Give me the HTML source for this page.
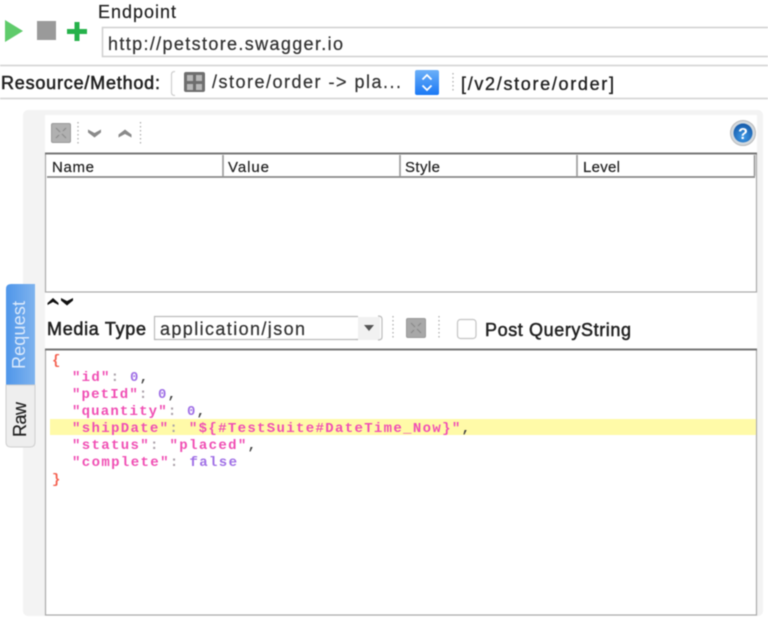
<!DOCTYPE html>
<html><head><meta charset="utf-8"><style>
html,body{margin:0;padding:0;background:#fff;width:768px;height:626px;overflow:hidden}
svg{display:block;filter:blur(.6px)}
text{font-family:"Liberation Sans",sans-serif;fill:#222;stroke:#222;stroke-width:.2px}
.m{font-family:"Liberation Mono",monospace;font-size:14px;font-weight:bold;stroke:none}
.k{fill:#f04fb4}.p{fill:#a9a0a8}.n{fill:#a070e6}.c{fill:#444}.b{fill:#f4604f}
</style></head><body>
<svg width="768" height="626" viewBox="0 0 768 626" xmlns="http://www.w3.org/2000/svg">
<defs>
<linearGradient id="bl" x1="0" y1="0" x2="0" y2="1"><stop offset="0" stop-color="#6cb0f8"/><stop offset="1" stop-color="#1a78f5"/></linearGradient>
<linearGradient id="tb" x1="0" y1="0" x2="1" y2="0"><stop offset="0" stop-color="#4f96ea"/><stop offset="1" stop-color="#7fb3ee"/></linearGradient>
<radialGradient id="hp" cx=".5" cy=".7" r=".7"><stop offset="0" stop-color="#3f9be8"/><stop offset="1" stop-color="#1559a8"/></radialGradient>
</defs>
<rect width="768" height="626" fill="#fff"/>
<!-- top toolbar -->
<path d="M5 20 L23 31 L5 42Z" fill="#5fcb6b"/>
<rect x="37" y="21" width="19" height="19" fill="#9a9a9a"/>
<path d="M74.500 22h5v7h7.500v5h-7.500v7h-5v-7h-7.500v-5h7.500z" fill="#26b24b"/>
<text x="98" y="18" font-size="18" textLength="78" lengthAdjust="spacing">Endpoint</text>
<path d="M768 27.500H102.500V56.500H768" fill="none" stroke="#cfcfcf" stroke-width="1.500"/>
<text x="108" y="50" font-size="18" textLength="235" lengthAdjust="spacing" style="fill:#333">http://petstore.swagger.io</text>
<!-- resource row -->
<path d="M0 65.500H768M0 98.500H768" stroke="#d2d2d2" stroke-width="1.500"/>
<text x="1" y="89" font-size="18" textLength="159" lengthAdjust="spacing" style="stroke-width:.55px">Resource/Method:</text>
<path d="M175 71.500q-3.500 0-3.500 3v18q0 3 3.500 3" fill="none" stroke="#cfcfcf" stroke-width="1.200"/>
<rect x="184" y="72" width="21" height="20" rx="2" fill="#6e6e6e"/>
<rect x="187" y="75" width="6" height="6" fill="#b8b8b8"/><rect x="196" y="75" width="6" height="6" fill="#b8b8b8"/><rect x="187" y="84" width="6" height="6" fill="#b8b8b8"/><rect x="196" y="84" width="6" height="6" fill="#b8b8b8"/>
<text x="212" y="88" font-size="18" textLength="189" lengthAdjust="spacing" style="fill:#333">/store/order -&gt; pla...</text>
<rect x="415" y="70" width="24" height="25" rx="2" fill="url(#bl)"/>
<path d="M422.500 79.500l4.500-4.500 4.500 4.500M422.500 85.500l4.500 4.500 4.500-4.500" fill="none" stroke="#fff" stroke-width="1.800"/>
<path d="M453 73V91" stroke="#aaa" stroke-width="1.200" stroke-dasharray="1.500 2.500"/>
<text x="461" y="90" font-size="18" textLength="153" lengthAdjust="spacing" style="stroke-width:.35px">[/v2/store/order]</text>
<!-- panel -->
<rect x="23" y="110" width="740" height="506" rx="5" fill="#f3f3f3"/>
<rect x="45" y="115" width="712" height="500" fill="#fff"/>
<rect x="51.500" y="123.500" width="19" height="19" rx="1.500" fill="#b0b0b0" stroke="#9a9a9a"/>
<path d="M56 128l4 4M66 138l-4-4M66 128l-3 3M56 138l3-3" stroke="#8c8c8c" stroke-width="1.200"/>
<path d="M78 122V144M140.500 122V144" stroke="#aaa" stroke-width="1.200" stroke-dasharray="1.500 2.500"/>
<path d="M88 129.500l6.500 3.500 6.500-3.500v3l-6.500 5-6.500-5z" fill="#8a8a8a"/>
<path d="M118.500 134.500l6.500-5 6.500 5v3l-6.500-3.500-6.500 3.500z" fill="#8a8a8a"/>
<circle cx="743" cy="133" r="12.500" fill="#d2d8dd" stroke="#bbb"/>
<circle cx="743" cy="133" r="9.500" fill="url(#hp)"/>
<text x="743" y="139" font-size="16" text-anchor="middle" style="font-weight:bold;fill:#fff;stroke:none">?</text>
<!-- table -->
<rect x="45.500" y="153.500" width="711" height="138.500" fill="#fff" stroke="#aaa" stroke-width="1.200"/>
<path d="M45 153.500H757" stroke="#777" stroke-width="2"/>
<path d="M47 177H755" stroke="#888" stroke-width="1.800"/>
<path d="M223 155V176M400 155V176M577 155V176M754.500 155V176" stroke="#999" stroke-width="1.600"/>
<text x="52" y="172" font-size="15" textLength="42" lengthAdjust="spacing">Name</text>
<text x="228" y="172" font-size="15" textLength="41" lengthAdjust="spacing">Value</text>
<text x="405" y="172" font-size="15" textLength="35" lengthAdjust="spacing">Style</text>
<text x="583" y="172" font-size="15" textLength="37" lengthAdjust="spacing">Level</text>
<!-- splitter arrows -->
<path d="M47.500 303l5.500-5 5.500 5v2l-5.500-3-5.500 3z" fill="#111"/>
<path d="M61 298l6 3 6-3v2.500l-6 5-6-5z" fill="#111"/>
<!-- media type row -->
<text x="47" y="335" font-size="18" textLength="99" lengthAdjust="spacing" style="stroke-width:.55px">Media Type</text>
<path d="M358 316.500H154.500V339.500H358" fill="none" stroke="#bbb" stroke-width="1.200"/>
<rect x="358" y="317" width="22" height="23" fill="#f1f1f1"/>
<path d="M378 316q4 0 4 3v18q0 3-4 3" fill="none" stroke="#bbb" stroke-width="1.200"/>
<text x="160" y="335" font-size="18" textLength="145" lengthAdjust="spacing" style="fill:#333">application/json</text>
<rect x="156" y="338" width="200" height="4" fill="#fff"/>
<path d="M155 339.500H358" stroke="#bbb" stroke-width="1.200"/>
<path d="M364 325h10l-5 6z" fill="#555"/>
<path d="M393 316V340M439 316V340" stroke="#aaa" stroke-width="1.200" stroke-dasharray="1.500 2.500"/>
<rect x="406.500" y="318.500" width="19" height="19" rx="1.500" fill="#a8a8a8" stroke="#999"/>
<path d="M411 323l4 4M421 333l-4-4M421 323l-3 3M411 333l3-3" stroke="#8a8a8a" stroke-width="1.200"/>
<rect x="457.500" y="319.500" width="18.500" height="19" rx="3" fill="#fff" stroke="#c4c4c4" stroke-width="1.200"/>
<text x="485" y="336" font-size="18" textLength="146" lengthAdjust="spacing" style="stroke-width:.5px">Post QueryString</text>
<!-- side tabs -->
<path d="M35 385V284H11q-5 0-5 5V385Z" fill="url(#tb)"/>
<path d="M6 385H35V442q0 5-5 5H11q-5 0-5-5Z" fill="#eeeeee" stroke="#cfcfcf"/>
<text transform="translate(25,369) rotate(-90)" font-size="18" textLength="68" lengthAdjust="spacing" style="fill:#dbe9fb;stroke:none">Request</text>
<text transform="translate(26,437) rotate(-90)" font-size="18" textLength="35" lengthAdjust="spacing" style="fill:#222">Raw</text>
<!-- editor -->
<rect x="45.500" y="349.500" width="711" height="265.500" fill="#fff" stroke="#aaa" stroke-width="1.200"/>
<path d="M45 349.500H757" stroke="#777" stroke-width="2"/>
<rect x="50" y="419" width="706" height="16" fill="#fffaa8"/>
<text class="m" x="52" y="364" textLength="9"><tspan class="b">{</tspan></text>
<text class="m" x="72" y="381" xml:space="preserve" textLength="76" lengthAdjust="spacing"><tspan class="k">"id"</tspan><tspan class="p">: </tspan><tspan class="n">0</tspan><tspan class="c">,</tspan></text>
<text class="m" x="72" y="398" xml:space="preserve" textLength="104" lengthAdjust="spacing"><tspan class="k">"petId"</tspan><tspan class="p">: </tspan><tspan class="n">0</tspan><tspan class="c">,</tspan></text>
<text class="m" x="72" y="415" xml:space="preserve" textLength="133" lengthAdjust="spacing"><tspan class="k">"quantity"</tspan><tspan class="p">: </tspan><tspan class="n">0</tspan><tspan class="c">,</tspan></text>
<text class="m" x="72" y="432" xml:space="preserve" textLength="398" lengthAdjust="spacing"><tspan class="k">"shipDate"</tspan><tspan class="p">: </tspan><tspan class="k">"${#TestSuite#DateTime_Now}"</tspan><tspan class="c">,</tspan></text>
<text class="m" x="72" y="449" xml:space="preserve" textLength="184" lengthAdjust="spacing"><tspan class="k">"status"</tspan><tspan class="p">: </tspan><tspan class="k">"placed"</tspan><tspan class="c">,</tspan></text>
<text class="m" x="72" y="466" xml:space="preserve" textLength="165" lengthAdjust="spacing"><tspan class="k">"complete"</tspan><tspan class="p">: </tspan><tspan class="n">false</tspan></text>
<text class="m" x="52" y="483" textLength="9"><tspan class="b">}</tspan></text>
</svg>
</body></html>
